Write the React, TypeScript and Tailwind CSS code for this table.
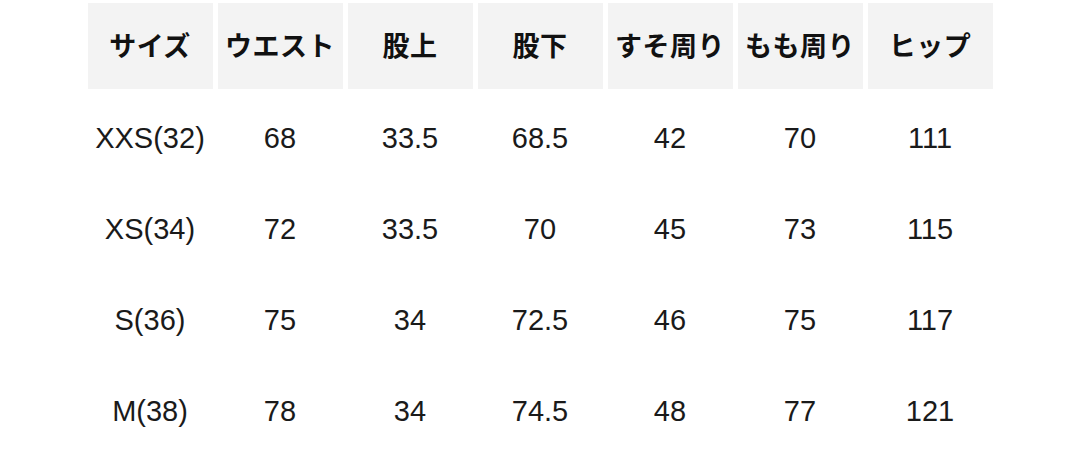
import React from "react";

const headers = ["サイズ", "ウエスト", "股上", "股下", "すそ周り", "もも周り", "ヒップ"];
const rows = [
  ["XXS(32)", "68", "33.5", "68.5", "42", "70", "111"],
  ["XS(34)", "72", "33.5", "70", "45", "73", "115"],
  ["S(36)", "75", "34", "72.5", "46", "75", "117"],
  ["M(38)", "78", "34", "74.5", "48", "77", "121"],
];

export default function App() {
  return (
    <div className="w-[1080px] h-[456px] bg-white overflow-hidden pt-[3px]">
      <div className="flex justify-center gap-[5px] h-[86px]">
        {headers.map((h) => (
          <div
            key={h}
            className="w-[125px] h-full bg-[#f3f3f3] flex items-center justify-center text-[27px] font-bold text-[#111] tracking-[0.5px] pb-[2px]"
            style={{ fontFamily: '"Noto Sans CJK JP", sans-serif' }}
          >
            {h}
          </div>
        ))}
      </div>
      <div className="mt-[4px]">
        {rows.map((r, i) => (
          <div key={i} className="flex justify-center gap-[5px] h-[91px]">
            {r.map((c, j) => (
              <div
                key={j}
                className="w-[125px] h-full flex items-center justify-center text-[29px] text-[#1a1a1a]"
                style={{ fontFamily: '"Liberation Sans", Arial, sans-serif' }}
              >
                {c}
              </div>
            ))}
          </div>
        ))}
      </div>
    </div>
  );
}
